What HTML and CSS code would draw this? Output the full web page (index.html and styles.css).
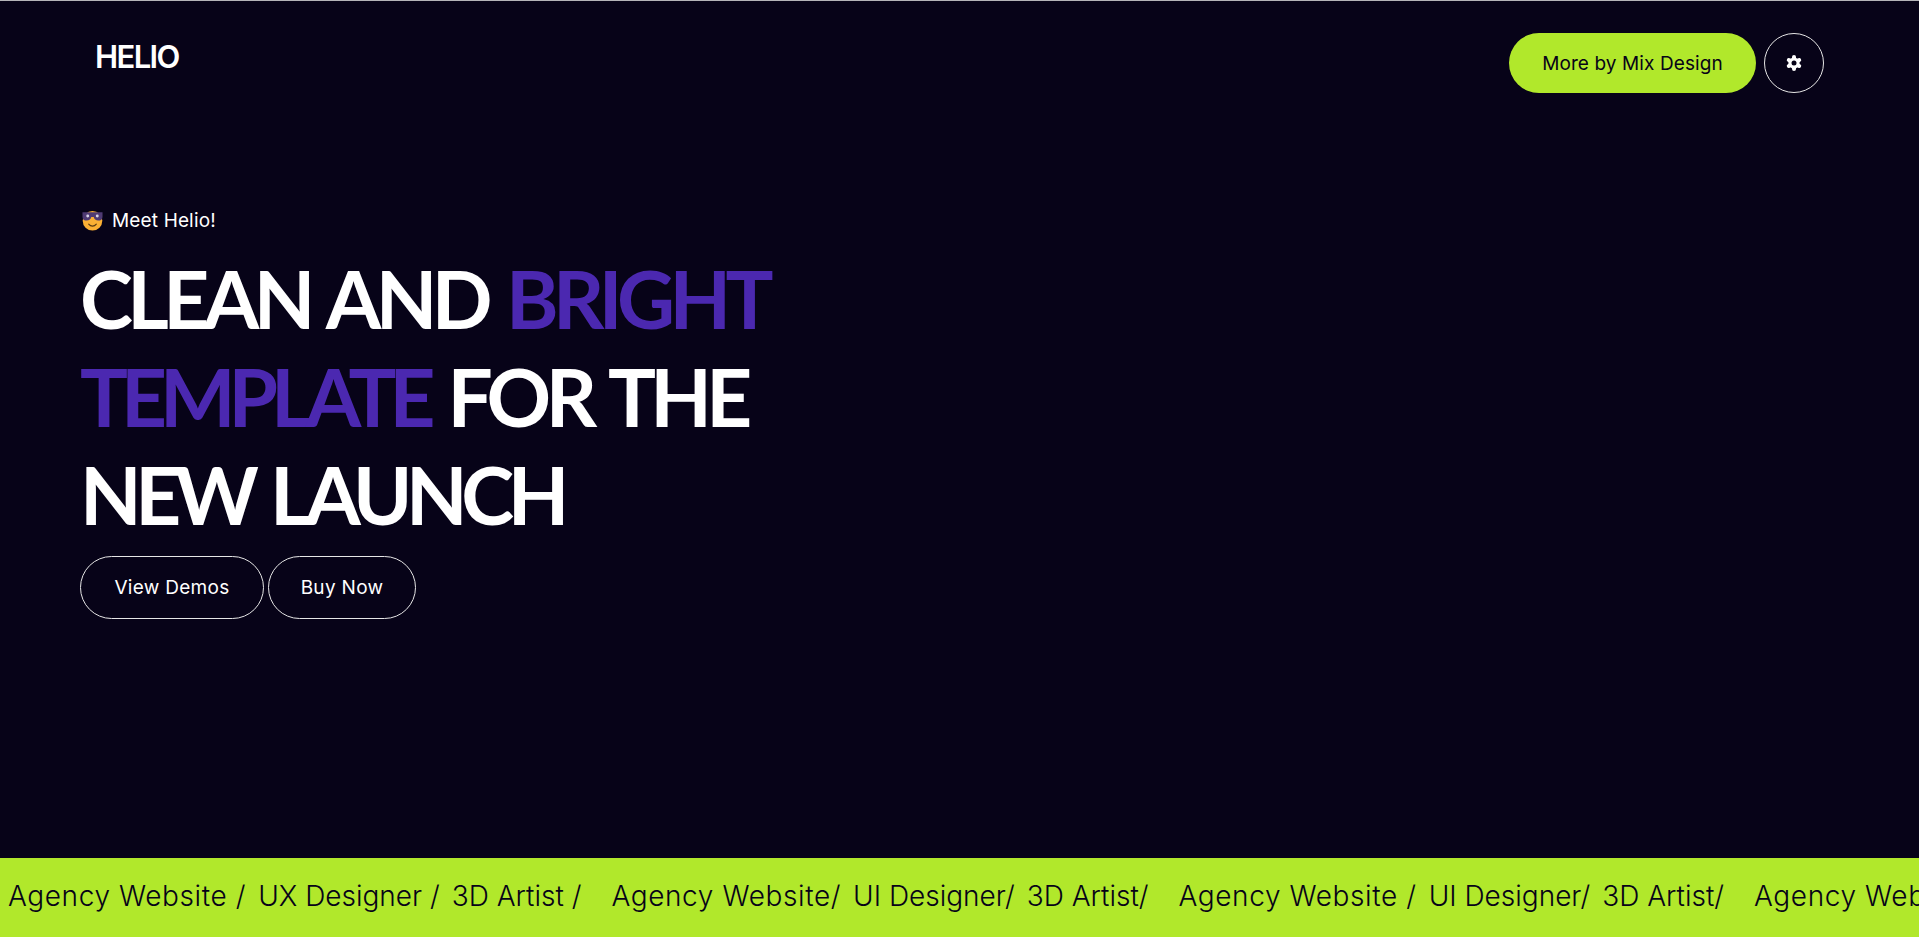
FILE: index.html
```html
<!DOCTYPE html>
<html lang="en">

<head>
    <meta charset="UTF-8">
    <meta name="viewport" content="width=device-width, initial-scale=1.0">
    <title>Helio</title>
    <link rel="stylesheet" href="styles.css">
</head>

<body>
    <header class="nav">
        <a class="logo" href="#">HELIO</a>
        <div class="nav-actions">
            <a class="btn-more" href="#">More by Mix Design</a>
            <a class="btn-settings" href="#" aria-label="Settings">
                <svg class="gear" viewBox="0 0 16 16">
                    <circle cx="8" cy="8" r="5.6" fill="#fff"/>
                    <g stroke="#fff" stroke-width="4" stroke-linecap="round">
                        <path d="M8 2v12"/>
                        <path d="M2.800 5l10.400 6"/>
                        <path d="M2.800 11l10.400-6"/>
                    </g>
                    <circle cx="8" cy="8" r="2.500" fill="#070318"/>
                </svg>
            </a>
        </div>
    </header>

    <main class="hero">
        <p class="hero-tag">
            <svg class="emoji" viewBox="1 1.500 22 21.500">
                <circle cx="12" cy="12.500" r="10.300" fill="#fbb034"/>
                <path d="M1.500 3.500h21v4.700c0 2.600-1.800 4.100-4.500 4.100-2.600 0-4.300-1.400-4.700-3.700h-2.600c-.4 2.300-2.100 3.700-4.700 3.700-2.700 0-4.500-1.500-4.500-4.100z" fill="#4f3a73"/>
                <circle cx="7" cy="7.500" r="1.500" fill="#d9d4e8"/>
                <circle cx="17" cy="7.500" r="1.500" fill="#d9d4e8"/>
                <path d="M8 16c1.200 1.500 2.500 2.100 4 2.100s2.800-.6 4-2.100" fill="none" stroke="#5a3a12" stroke-width="1.200" stroke-linecap="round"/>
            </svg>
            Meet Helio!
        </p>
        <h1 class="hero-title">
            CLEAN AND <span class="accent">BRIGHT</span><br>
            <span class="accent accent-tight">TEMPLATE</span> FOR THE<br>
            <span class="title-last">NEW LAUNCH</span>
        </h1>
        <div class="hero-actions">
            <a class="btn-outline btn-demos" href="#">View Demos</a>
            <a class="btn-outline btn-buy" href="#">Buy Now</a>
        </div>
    </main>

    <div class="marquee">
        <span class="word word-agency">Agency Website /</span>
        <span class="word">UX Designer /</span>
        <span class="word">3D Artist /</span>
        <span class="word word-agency word-first">Agency Website/</span>
        <span class="word">UI Designer/</span>
        <span class="word">3D Artist/</span>
        <span class="word word-agency word-first">Agency Website /</span>
        <span class="word">UI Designer/</span>
        <span class="word">3D Artist/</span>
        <span class="word word-agency word-first">Agency Website /</span>
    </div>
</body>

</html>
```
FILE: styles.css
```css
html {
    background-color: #070318;
}

body {
    font-family: Inter, "Open Sans", sans-serif;
    background-color: #070318;
    color: #fff;
    display: flex;
    flex-direction: column;
    box-sizing: border-box;
    height: 100vh;
    margin: 0;
    border-top: 1px solid #b5b5b9;
    overflow: hidden;
}

a {
    text-decoration: none;
    color: inherit;
}

.nav {
    display: flex;
    justify-content: space-between;
    align-items: flex-start;
    padding: 32px 96px 0;
}

.logo {
    font-size: 31px;
    font-weight: 600;
    line-height: 38px;
    letter-spacing: -1.6px;
    margin-top: 5px;
    margin-left: -1px;
}

.nav-actions {
    display: flex;
    gap: 8px;
    margin-right: -1px;
}

.btn-more {
    display: flex;
    align-items: center;
    justify-content: center;
    width: 247px;
    height: 60px;
    background-color: #b1e82b;
    border-radius: 30px;
    color: #070318;
    font-size: 19px;
    letter-spacing: 0.1px;
}

.btn-settings {
    display: flex;
    align-items: center;
    justify-content: center;
    width: 58px;
    height: 58px;
    border: 1px solid #e6e6e6;
    border-radius: 50%;
}

.gear {
    width: 16px;
    height: 16px;
}

.hero {
    padding: 0 80px;
}

.hero-tag {
    display: flex;
    align-items: center;
    gap: 9px;
    margin: 114px 0 0 2px;
    font-size: 19px;
    line-height: 27px;
    letter-spacing: 0.15px;
}

.emoji {
    width: 21px;
    height: 21px;
}

.hero-title {
    margin: 15px 0 0;
    font-family: Lato, Inter, sans-serif;
    font-size: 80px;
    font-weight: 700;
    line-height: 98px;
    letter-spacing: -5.6px;
    word-spacing: 5px;
}

.accent {
    color: #4b28b0;
}

.accent-tight {
    letter-spacing: -7px;
}

.title-last {
    letter-spacing: -6.4px;
}

.hero-actions {
    display: flex;
    gap: 4px;
    margin-top: 13px;
}

.btn-outline {
    display: flex;
    align-items: center;
    justify-content: center;
    height: 61px;
    border: 1px solid #e6e6e6;
    border-radius: 32px;
    font-size: 19px;
    letter-spacing: 0.3px;
}

.btn-demos {
    width: 182px;
}

.btn-buy {
    width: 146px;
}

.marquee {
    display: flex;
    align-items: center;
    gap: 12px;
    margin-top: auto;
    height: 79px;
    padding: 0 0 3px 8px;
    box-sizing: border-box;
    background-color: #b1e82b;
    color: #070318;
    font-size: 28px;
    font-weight: 300;
    white-space: nowrap;
    overflow: hidden;
}

.word {
    flex: none;
}

.word-agency {
    letter-spacing: 0.6px;
}

.word-first {
    margin-left: 18px;
}
```
